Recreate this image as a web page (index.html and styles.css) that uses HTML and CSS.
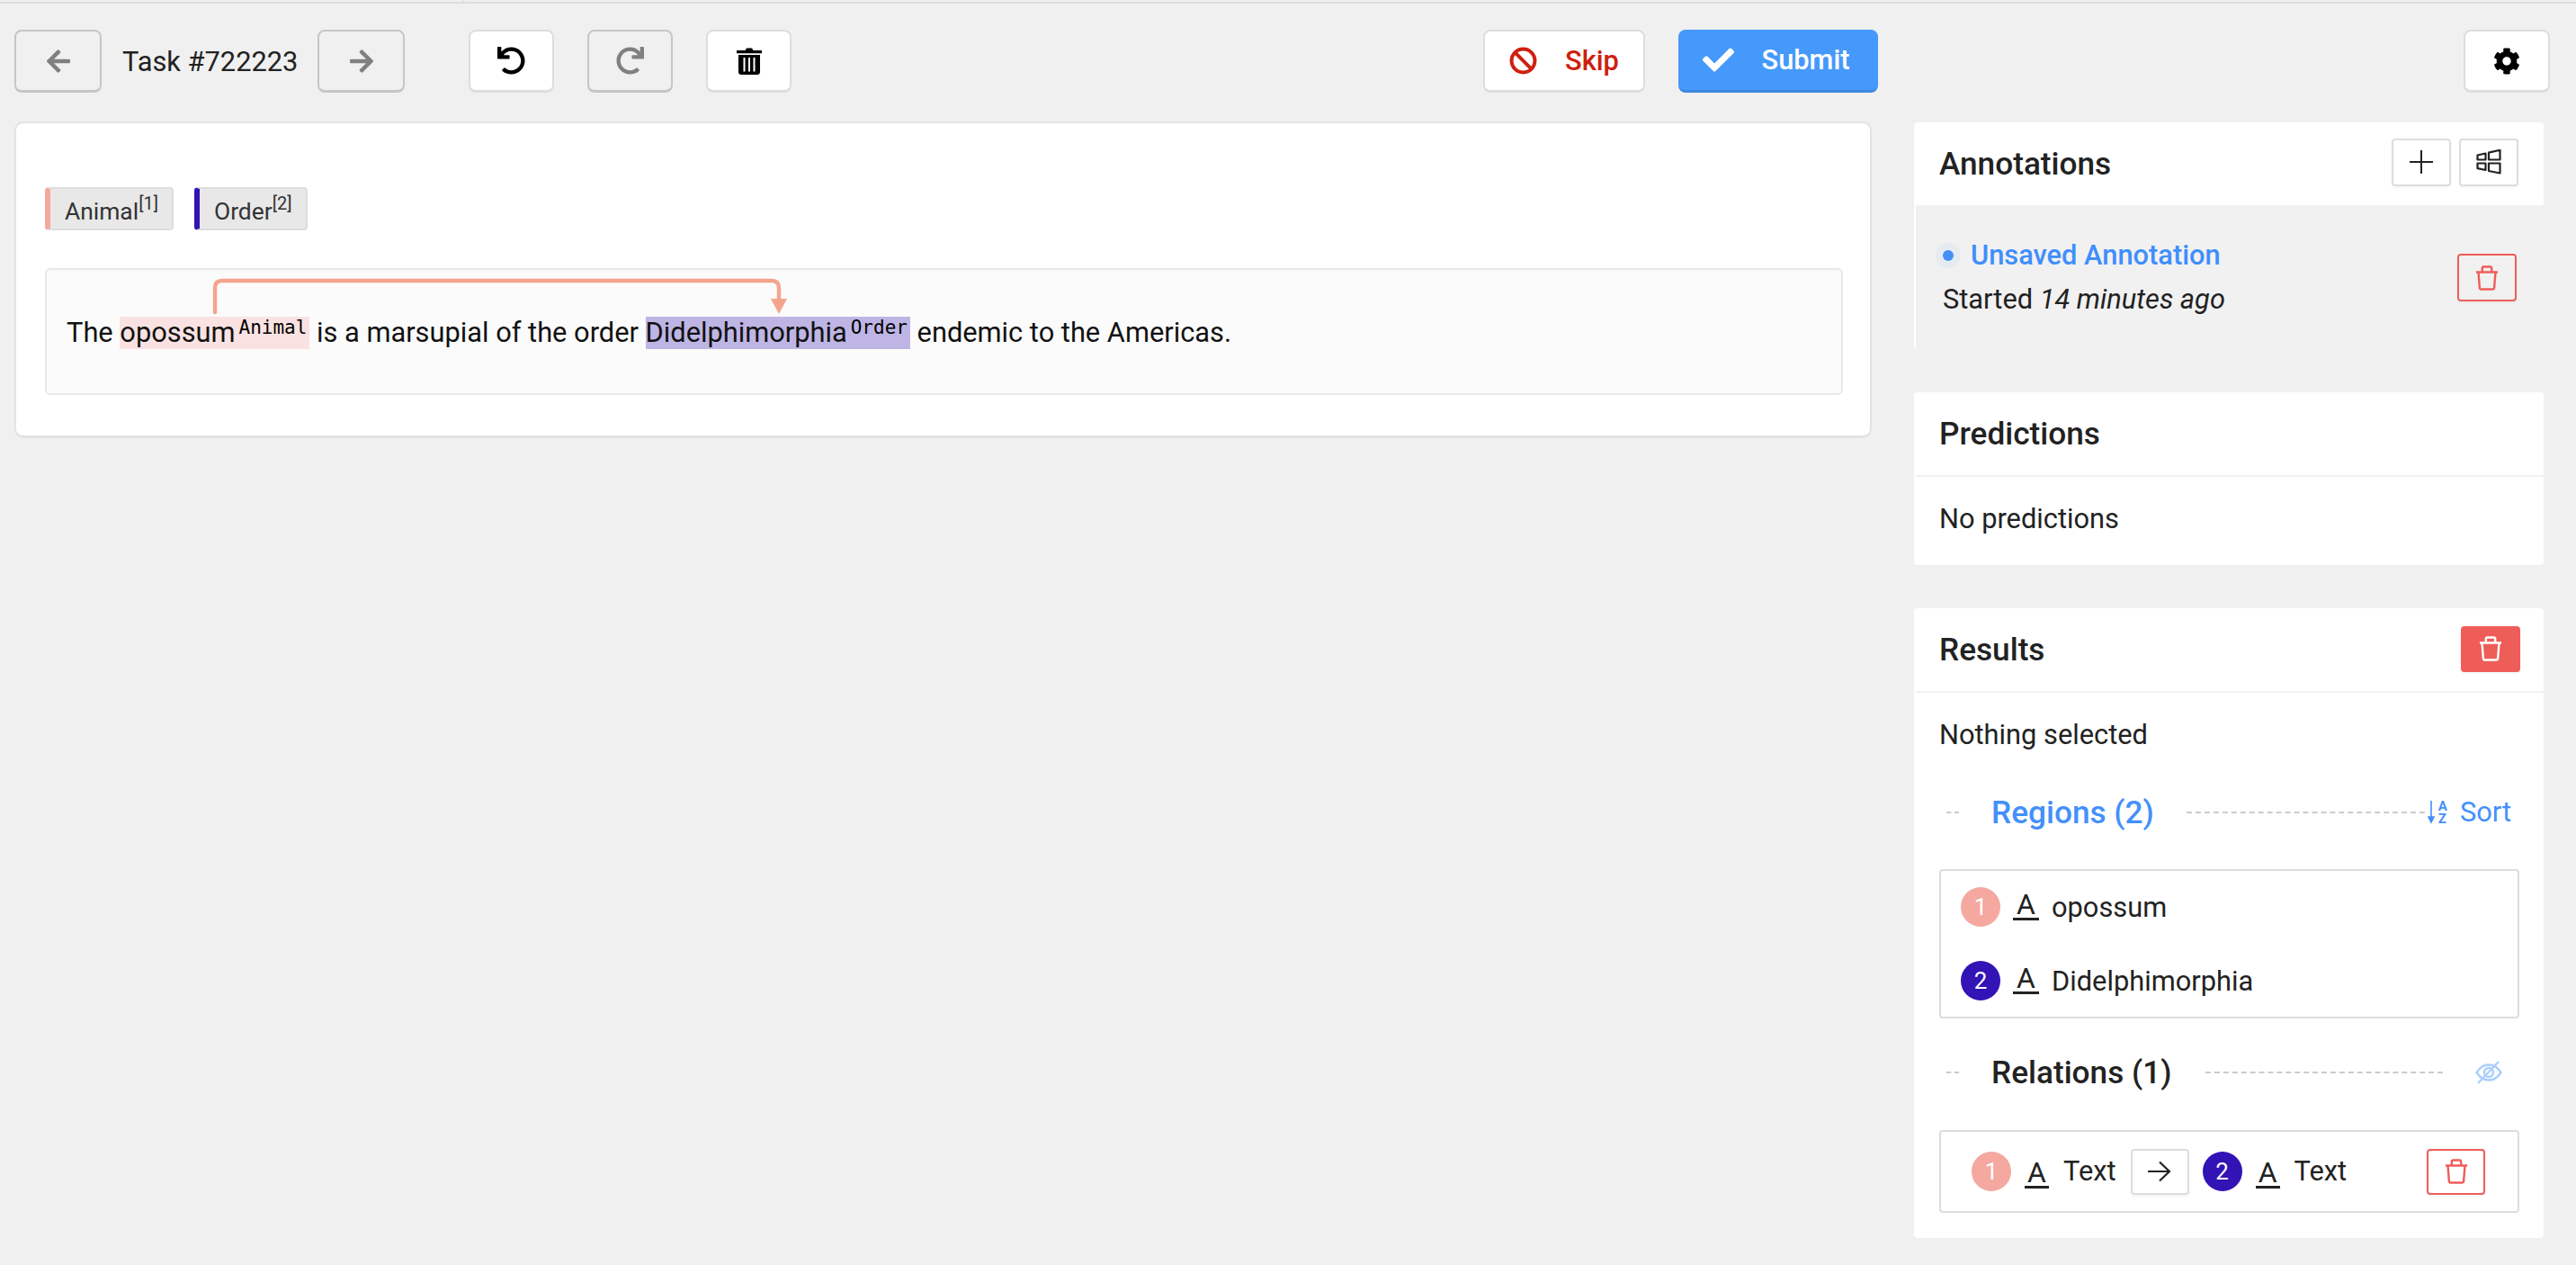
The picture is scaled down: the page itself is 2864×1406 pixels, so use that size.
FILE: index.html
```html
<!DOCTYPE html>
<html lang="en">
<head>
<meta charset="utf-8">
<title>Task #722223</title>
<link rel="stylesheet" href="styles.css">
</head>
<body>
<svg class="defs" aria-hidden="true">
  <symbol id="i-del" viewBox="0 0 26 28"><path d="M1 7.500h24M3.500 7.500l1.400 17.300c.1 1 .9 1.700 1.900 1.700h12.400c1 0 1.800-.7 1.900-1.700L22.500 7.500M7.800 7.500V3.200c0-1 .8-1.700 1.700-1.700h7c1 0 1.700.7 1.700 1.700v4.300" fill="none" stroke="currentColor" stroke-width="2.400" stroke-linejoin="round"/></symbol>
  <symbol id="i-undo" viewBox="0 0 512 512"><path d="M212.333 224.333H12c-6.627 0-12-5.373-12-12V12C0 5.373 5.373 0 12 0h48c6.627 0 12 5.373 12 12v78.112C117.773 39.279 184.26 7.47 258.175 8.007c136.906.994 246.448 111.623 246.157 248.532C504.041 393.258 393.12 504 256.333 504c-64.089 0-122.496-24.313-166.51-64.215-5.099-4.622-5.334-12.554-.467-17.42l33.967-33.967c4.474-4.474 11.662-4.717 16.401-.525C170.76 415.336 211.58 432 256.333 432c97.268 0 176-78.716 176-176 0-97.267-78.716-176-176-176-58.496 0-110.28 28.476-142.274 72.333h98.274c6.627 0 12 5.373 12 12v48c0 6.627-5.373 12-12 12z" fill="currentColor"/></symbol>
</svg>

<div class="topline"><span class="tick"></span></div>

<header class="toolbar">
  <button class="btn btn-nav btn-off" aria-label="Previous">
    <svg class="ic-arrow" viewBox="0 0 448 512"><path d="M257.500 445.100l-22.200 22.200c-9.400 9.400-24.600 9.400-33.900 0L7 273c-9.400-9.400-9.400-24.600 0-33.900L201.400 44.700c9.400-9.400 24.600-9.400 33.900 0l22.200 22.200c9.500 9.500 9.300 25-.4 34.300L136.600 216H424c13.300 0 24 10.700 24 24v32c0 13.300-10.700 24-24 24H136.600l120.500 114.800c9.800 9.300 10 24.800.4 34.300z" fill="currentColor"/></svg>
  </button>
  <span class="task">Task #722223</span>
  <button class="btn btn-nav btn-off" aria-label="Next">
    <svg class="ic-arrow" viewBox="0 0 448 512"><path d="M190.500 66.900l22.200-22.200c9.400-9.400 24.600-9.400 33.900 0L441 239c9.400 9.400 9.400 24.600 0 33.900L246.600 467.300c-9.400 9.400-24.600 9.400-33.900 0l-22.200-22.200c-9.500-9.500-9.300-25 .4-34.300L311.400 296H24c-13.300 0-24-10.700-24-24v-32c0-13.300 10.700-24 24-24h287.400L190.900 101.200c-9.800-9.300-10-24.800-.4-34.300z" fill="currentColor"/></svg>
  </button>
  <div class="history">
    <button class="btn btn-hist" aria-label="Undo"><svg class="ic-hist"><use href="#i-undo"/></svg></button>
    <button class="btn btn-hist btn-off" aria-label="Redo"><svg class="ic-hist flip"><use href="#i-undo"/></svg></button>
    <button class="btn btn-hist" aria-label="Reset">
      <svg class="ic-trash" viewBox="0 0 28 30"><path d="M0 3h9.500L11 .5h6L18.500 3H28v3.200H0z" fill="currentColor"/><path d="M2 8h24v19c0 1.700-1.300 3-3 3H5c-1.700 0-3-1.300-3-3z" fill="currentColor"/><path d="M8.500 11v15.500M14 11v15.500M19.500 11v15.500" stroke="#fff" stroke-width="2"/></svg>
    </button>
  </div>
  <button class="btn btn-skip">
    <svg class="ic-ban" viewBox="0 0 28 28"><circle cx="14" cy="14" r="11.700" fill="none" stroke="currentColor" stroke-width="3.600"/><path d="M6 6l16 16" stroke="currentColor" stroke-width="3.600"/></svg>
    <span>Skip</span>
  </button>
  <button class="btn btn-submit">
    <svg class="ic-check" viewBox="0 0 512 512"><path d="M173.898 439.404l-166.400-166.400c-9.997-9.997-9.997-26.206 0-36.204l36.203-36.204c9.997-9.998 26.207-9.998 36.204 0L192 312.690 432.095 72.596c9.997-9.997 26.207-9.997 36.204 0l36.203 36.204c9.997 9.997 9.997 26.206 0 36.204l-294.400 294.401c-9.998 9.997-26.207 9.997-36.204-.001z" fill="currentColor"/></svg>
    <span>Submit</span>
  </button>
  <button class="btn btn-gear" aria-label="Settings">
    <svg class="ic-cog" viewBox="0 0 512 512"><path fill-rule="evenodd" d="M487.400 315.700l-42.600-24.600c4.300-23.200 4.300-47 0-70.200l42.600-24.600c4.900-2.800 7.100-8.600 5.500-14-11.100-35.600-30-67.800-54.700-94.600-3.800-4.100-10-5.100-14.800-2.300L380.800 110c-17.900-15.400-38.500-27.300-60.800-35.100V25.800c0-5.600-3.900-10.500-9.400-11.700-36.700-8.200-74.300-7.800-109.200 0-5.500 1.200-9.400 6.100-9.400 11.700V75c-22.200 7.900-42.800 19.800-60.800 35.100L88.700 85.500c-4.900-2.800-11-1.900-14.800 2.300-24.700 26.700-43.600 58.900-54.700 94.600-1.700 5.400.6 11.200 5.500 14L67.300 221c-4.300 23.200-4.300 47 0 70.200l-42.600 24.600c-4.900 2.800-7.100 8.600-5.500 14 11.100 35.600 30 67.800 54.700 94.600 3.800 4.100 10 5.100 14.800 2.300l42.600-24.600c17.900 15.400 38.500 27.300 60.800 35.100v49.200c0 5.600 3.900 10.500 9.400 11.700 36.700 8.200 74.300 7.800 109.200 0 5.500-1.200 9.400-6.100 9.400-11.700v-49.200c22.200-7.900 42.800-19.800 60.800-35.100l42.600 24.600c4.900 2.800 11 1.900 14.800-2.300 24.700-26.700 43.600-58.900 54.700-94.600 1.500-5.500-.7-11.300-5.600-14.100zM256 336c-44.100 0-80-35.900-80-80s35.900-80 80-80 80 35.900 80 80-35.900 80-80 80z" fill="currentColor"/></svg>
  </button>
</header>

<main class="layout">
  <section class="card">
    <div class="tags">
      <span class="tag tag-animal">Animal<sup>[1]</sup></span>
      <span class="tag tag-order">Order<sup>[2]</sup></span>
    </div>
    <div class="textbox">
      <svg class="relation-arc" viewBox="0 0 640 50" width="640" height="50">
        <path d="M2 37V10Q2 2 10 2H621Q629 2 629 10V24" fill="none" stroke="#f4a48d" stroke-width="4.400" stroke-linecap="round"/>
        <path d="M620 22H638L629 39z" fill="#f4a48d"/>
      </svg>
      <p class="sentence">The <span class="hl hl-animal">opossum<span class="hl-label">Animal</span></span> is a marsupial of the order <span class="hl hl-order">Didelphimorphia<span class="hl-label">Order</span></span> endemic to the Americas.</p>
    </div>
  </section>

  <aside class="side">
    <section class="panel">
      <header class="panel-head">
        <h2>Annotations</h2>
        <div class="head-actions">
          <button class="btn-sq" aria-label="Add"><svg class="ic-plus" viewBox="0 0 26 26"><path d="M13 0v26M0 13h26" stroke="currentColor" stroke-width="2"/></svg></button>
          <button class="btn-sq" aria-label="Compare"><svg class="ic-win" viewBox="0 0 28 28"><path d="M1.500 6.500l9-2v7h-9zM14 3.600l12.500-2.800v10.700H14zM1.500 15.500h9v7.500l-9-1.800zM14 15.500h12.500v11L14 24z" fill="none" stroke="currentColor" stroke-width="2.200" stroke-linejoin="round"/></svg></button>
        </div>
      </header>
      <div class="anno">
        <div class="anno-info">
          <div class="anno-title"><span class="dot"></span>Unsaved Annotation</div>
          <div class="anno-when">Started <em>14 minutes ago</em></div>
        </div>
        <button class="btn-sq btn-danger" aria-label="Delete annotation"><svg class="ic-del"><use href="#i-del"/></svg></button>
      </div>
    </section>

    <section class="panel">
      <header class="panel-head panel-rule"><h2>Predictions</h2></header>
      <div class="pred">No predictions</div>
    </section>

    <section class="panel">
      <header class="panel-head panel-rule">
        <h2>Results</h2>
        <button class="btn-sq btn-solid" aria-label="Delete all"><svg class="ic-del"><use href="#i-del"/></svg></button>
      </header>
      <div class="results">
        <div class="nothing">Nothing selected</div>

        <div class="divider divider-regions">
          <span class="dash dash-short"></span>
          <span class="div-title blue">Regions (2)</span>
          <span class="dash"></span>
          <span class="sort">
            <span class="sort-icon">
              <svg class="ic-down" viewBox="0 0 8 26"><path d="M4 0v23M1 18l3 6 3-6z" fill="currentColor" stroke="currentColor" stroke-width="1.600"/></svg>
              <span class="az"><b>A</b><b>Z</b></span>
            </span>
            Sort
          </span>
        </div>

        <ul class="regions">
          <li class="region"><span class="badge badge-one">1</span><span class="letter">A</span><span>opossum</span></li>
          <li class="region"><span class="badge badge-two">2</span><span class="letter">A</span><span>Didelphimorphia</span></li>
        </ul>

        <div class="divider divider-relations">
          <span class="dash dash-short"></span>
          <span class="div-title">Relations (1)</span>
          <span class="dash"></span>
          <svg class="ic-eye" viewBox="0 0 30 26"><path d="M1.500 13C5 7.500 9.500 4.500 15 4.500S25 7.500 28.500 13C25 18.500 20.500 21.500 15 21.500S5 18.500 1.500 13z" fill="none" stroke="currentColor" stroke-width="2.400"/><circle cx="15" cy="13" r="5" fill="none" stroke="currentColor" stroke-width="2.400"/><path d="M26 1L3 25" stroke="currentColor" stroke-width="2.400"/></svg>
        </div>

        <div class="relation">
          <span class="badge badge-one">1</span><span class="letter letter-sm">A</span><span class="rel-text">Text</span>
          <button class="btn-sq btn-rel" aria-label="Direction"><svg class="ic-rel" viewBox="0 0 26 24"><path d="M0 12h24M13 1.500L24 12 13 22.500" fill="none" stroke="currentColor" stroke-width="2.200"/></svg></button>
          <span class="badge badge-two">2</span><span class="letter letter-sm">A</span><span class="rel-text">Text</span>
          <button class="btn-sq btn-danger btn-rel-del" aria-label="Delete relation"><svg class="ic-del"><use href="#i-del"/></svg></button>
        </div>
      </div>
    </section>
  </aside>
</main>
</body>
</html>
```

FILE: styles.css
```css
* { box-sizing: border-box; }
html, body { margin: 0; padding: 0; }
body {
  width: 2864px;
  height: 1406px;
  overflow: hidden;
  background: #f0f0f0;
  color: #222;
  font-family: Roboto, "Liberation Sans", sans-serif;
  font-size: 30.8px;
}
.defs { display: none; }
button { font-family: inherit; padding: 0; cursor: pointer; }
h2 { margin: 0; font-size: 35.2px; font-weight: 500; line-height: 40px; }
ul { margin: 0; padding: 0; list-style: none; }

.topline { height: 4px; border-bottom: 2px solid #ddd; display: flex; padding-left: 515px; }
.tick { width: 1px; height: 2px; background: #ddd; }

.toolbar { display: flex; align-items: center; height: 70px; margin-top: 29px; padding-left: 16px; }
.btn {
  display: flex;
  align-items: center;
  justify-content: center;
  height: 70px;
  background: #fff;
  border: 2px solid #ddd;
  border-bottom-width: 3px;
  border-radius: 8px;
  color: #000;
}
.btn-off { background: #f0f0f0; border-color: #c6c6c6; color: #808080; }
.btn-nav { width: 97px; }
.task { margin: 0 24px 0 23px; width: 193px; white-space: nowrap; }
.history { display: flex; gap: 37px; margin-left: 71px; }
.btn-hist { width: 95px; }
.btn-skip { width: 180px; margin-left: 769px; color: #cf1f10; font-weight: 500; font-size: 30.8px; gap: 31px; }
.btn-submit { width: 222px; margin-left: 37px; padding-right: 4px; background: #4599fb; border: 0; border-bottom: 3px solid #3d88e0; color: #fff; font-weight: 500; font-size: 30.8px; gap: 30px; }
.btn-gear { width: 96px; margin-left: 651px; }
.ic-arrow { width: 26px; height: 30px; }
.ic-hist { width: 31px; height: 31px; }
.flip { transform: scaleX(-1); }
.ic-trash { width: 28px; height: 30px; }
.ic-ban { width: 31px; height: 31px; }
.ic-check { width: 35px; height: 35px; }
.ic-cog { width: 30px; height: 30px; }

.layout { display: flex; align-items: flex-start; gap: 47px; margin-top: 32px; padding-left: 16px; }

.card {
  width: 2065px;
  height: 352px;
  padding: 71px 30px 0 32px;
  background: #fff;
  border: 2px solid #e3e3e3;
  border-bottom-width: 3px;
  border-radius: 10px;
}
.tags { display: flex; gap: 23px; height: 48px; }
.tag {
  display: flex;
  align-items: flex-start;
  height: 48px;
  padding: 9px 15px 0 16px;
  background: #e8e8e8;
  border: 2px solid #ddd;
  border-left-width: 6px;
  border-radius: 4px;
  font-size: 26.4px;
  line-height: 32px;
  color: #333;
}
.tag sup { font-size: 20px; line-height: 20px; margin-top: -3px; }
.tag-animal { border-left-color: #f4a8a0; }
.tag-order { border-left-color: #3213b5; }

.textbox {
  position: relative;
  height: 141px;
  margin-top: 42px;
  padding: 52px 22px 0;
  background: #fbfbfb;
  border: 2px solid #e8e8e8;
  border-radius: 6px;
}
.relation-arc { position: absolute; left: 185px; top: 10px; overflow: visible; }
.sentence { margin: 0; line-height: 36px; color: #111; white-space: nowrap; }
.hl { display: inline-block; height: 36px; }
.hl-animal { background: #fae2e2; }
.hl-order { background: #beb5e5; }
.hl-label {
  display: inline-block;
  vertical-align: top;
  margin-left: 4px;
  padding-right: 3px;
  font-family: "DejaVu Sans Mono", monospace;
  font-size: 21px;
  line-height: 24px;
  color: #000;
}

.side { display: flex; flex-direction: column; gap: 48px; width: 700px; margin-top: 1px; }
.panel { background: #fff; border-radius: 4px; }
.panel-head { display: flex; align-items: center; justify-content: space-between; height: 92px; padding: 0 26px 0 28px; }
.panel-rule { height: 94px; border-bottom: 2px solid #f1f1f1; margin-left: 2px; padding-left: 26px; }
.head-actions { display: flex; gap: 9px; margin-right: 2px; margin-top: -4px; }
.btn-sq {
  display: flex;
  align-items: center;
  justify-content: center;
  width: 66px;
  height: 53px;
  background: #fff;
  border: 2px solid #ddd;
  border-radius: 4px;
  box-shadow: 0 2px 3px rgba(0,0,0,.04);
  color: #222;
}
.ic-plus { width: 26px; height: 26px; }
.ic-win { width: 28px; height: 28px; }
.ic-del { width: 26px; height: 28px; }
.btn-danger { background: transparent; border-color: #ef5d58; color: #ef5d58; }
.btn-solid { background: #ef5d58; border-color: #ef5d58; color: #fff; height: 51px; margin-top: -2px; }

.anno {
  display: flex;
  align-items: center;
  justify-content: space-between;
  height: 160px;
  margin-left: 2px;
  padding: 0 30px 0 30px;
  background: #f1f1f1;
  border-radius: 0 0 4px 0;
}
.anno-title { display: flex; align-items: center; color: #3f8efc; font-weight: 500; line-height: 40px; white-space: nowrap; }
.dot { width: 12px; height: 12px; margin-right: 19px; border-radius: 50%; background: #458ffb; box-shadow: 0 0 0 8px #e6eaf1; }
.anno-when { margin-top: 9px; line-height: 40px; white-space: nowrap; }
.anno-when em { font-style: italic; }
.anno .btn-sq { margin-top: 1px; }

.pred { height: 98px; padding: 30px 28px 0; line-height: 34px; }

.results { padding: 30px 27px 28px 28px; }
.nothing { line-height: 34px; }
.divider { display: flex; align-items: center; height: 50px; padding-left: 8px; }
.dash { flex: 1; height: 0; border-top: 2px dashed #ccc; }
.dash-short { flex: 0 0 14px; }
.div-title { margin: 0 37px 0 36px; font-size: 35.2px; font-weight: 500; white-space: nowrap; }
.blue { color: #4390fb; }
.divider-regions { margin-top: 44px; padding-right: 9px; }
.divider-regions .div-title { margin-right: 36px; }
.sort { display: flex; align-items: center; color: #4390fb; gap: 14px; margin-left: 3px; line-height: 34px; }
.sort-icon { display: flex; align-items: center; gap: 4px; }
.ic-down { width: 8px; height: 26px; }
.az { display: flex; flex-direction: column; font-size: 15px; line-height: 14px; }
.az b { font-weight: 700; }

.regions { display: flex; flex-direction: column; gap: 38px; margin-top: 38px; padding: 18px 22px; border: 2px solid #ddd; border-radius: 4px; }
.region { display: flex; align-items: center; height: 44px; }
.badge { display: flex; align-items: center; justify-content: center; flex: none; width: 44px; height: 44px; border-radius: 50%; color: #fff; font-size: 26px; }
.badge-one { background: #f4a8a0; }
.badge-two { background: #3213b5; }
.letter {
  flex: none;
  width: 29px;
  height: 29px;
  margin: 0 14px;
  border-bottom: 3px solid #222;
  text-align: center;
  font-size: 32px;
  line-height: 22px;
}

.divider-relations { margin-top: 35px; padding-right: 19px; }
.ic-eye { width: 30px; height: 26px; margin-left: 36px; color: #a9cffc; flex: none; }

.relation { display: flex; align-items: center; height: 92px; margin-top: 39px; padding: 0 36px 0 34px; border: 2px solid #ddd; border-radius: 4px; }
.letter-sm { width: 27px; margin: 8px 16px 0 15px; }
.rel-text { margin-top: -2px; }
.btn-rel { width: 65px; height: 51px; margin: 0 15px 0 16px; }
.ic-rel { width: 26px; height: 24px; }
.btn-rel-del { width: 65px; height: 51px; margin-left: auto; }
```
